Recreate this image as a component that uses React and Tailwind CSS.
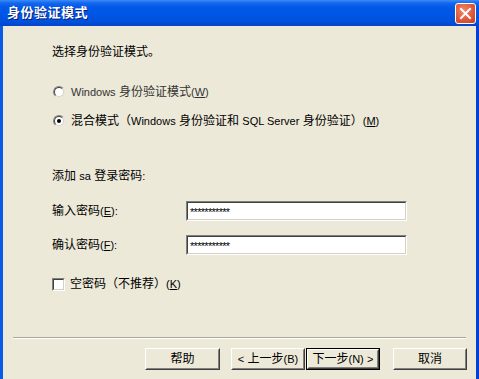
import React from "react";

const font = { fontFamily: '"Liberation Sans", "Noto Sans CJK SC", sans-serif' };

function L({ children }) {
  return <span className="text-[11px]">{children}</span>;
}

function Radio({ checked }) {
  return (
    <span className="relative inline-block w-[12px] h-[12px] rounded-full bg-white border border-t-[#808080] border-l-[#808080] border-b-[#e8e6dc] border-r-[#e8e6dc] shrink-0">
      <span className="absolute inset-0 rounded-full border border-t-[#404040] border-l-[#404040] border-b-[#d4d0c8] border-r-[#d4d0c8]" />
      {checked && (
        <span className="absolute left-[3px] top-[3px] w-[4px] h-[4px] rounded-full bg-black" />
      )}
    </span>
  );
}

function Sunken({ className, children }) {
  return (
    <div className={"border border-t-[#808080] border-l-[#808080] border-b-white border-r-white " + className}>
      <div className="w-full h-full border border-t-[#404040] border-l-[#404040] border-b-[#d4d0c8] border-r-[#d4d0c8] bg-white flex items-center">
        {children}
      </div>
    </div>
  );
}

function Btn({ children, def, w }) {
  return (
    <div className={(def ? "border border-black " : "") + "h-[22px] " + w}>
      <div className="h-full w-full border border-t-white border-l-white border-b-[#404040] border-r-[#404040] bg-[#ece9d8]">
        <div className="h-full w-full border border-t-[#ece9d8] border-l-[#ece9d8] border-b-[#808080] border-r-[#808080] flex items-center justify-center text-[12px] text-black leading-none">
          {children}
        </div>
      </div>
    </div>
  );
}

export default function App() {
  return (
    <div className="w-[479px] h-[379px] overflow-hidden flex flex-col bg-[#0054e3]" style={font}>
      {/* Title bar */}
      <div className="h-[26px] shrink-0 flex items-center justify-between pl-[7px] pr-[3px] bg-[linear-gradient(to_bottom,#3b8cf8_0%,#1466ec_12%,#0058e8_30%,#0055e4_60%,#0050db_85%,#0543c6_100%)]">
        <span className="text-white font-bold text-[13px] tracking-[0.5px] [text-shadow:1px_1px_0_#0a1f7a]">身份验证模式</span>
        <div className="w-[21px] h-[21px] rounded-[3px] border border-white bg-[radial-gradient(circle_at_40%_35%,#f08a6a_0%,#e0583a_55%,#c53a1c_100%)] flex items-center justify-center">
          <svg width="13" height="13" viewBox="0 0 13 13">
            <path d="M2 2 L11 11 M11 2 L2 11" stroke="white" strokeWidth="2" strokeLinecap="square" />
          </svg>
        </div>
      </div>
      {/* Body */}
      <div className="flex-1 flex px-[3px] bg-[linear-gradient(to_right,#0a5ce8,#0441d2)]">
        <div className="flex-1 bg-[#ece9d8] flex flex-col text-[12px] text-black leading-[16px]">
          <div className="pl-[49px] flex flex-col">
            <div className="mt-[18px] h-[16px]">选择身份验证模式。</div>
            <div className="mt-[24px] h-[16px] flex items-center gap-[6px] pl-[1px]">
              <Radio />
              <span className="text-[#333]"><L>Windows</L> 身份验证模式<L>(<u>W</u>)</L></span>
            </div>
            <div className="mt-[13px] h-[16px] flex items-center gap-[6px] pl-[1px]">
              <Radio checked />
              <span>混合模式（<L>Windows</L> 身份验证和 <L>SQL Server</L> 身份验证）<L>(<u>M</u>)</L></span>
            </div>
            <div className="mt-[39px] h-[16px]">添加 <L>sa</L> 登录密码<L>:</L></div>
            <div className="mt-[17px] h-[20px] flex items-center">
              <span className="w-[134px]">输入密码<L>(<u>E</u>):</L></span>
              <Sunken className="w-[221px] h-[20px]">
                <span className="pl-[2px] text-[11px] leading-none tracking-[-0.7px] pt-[3px]">***********</span>
              </Sunken>
            </div>
            <div className="mt-[14px] h-[20px] flex items-center">
              <span className="w-[134px]">确认密码<L>(<u>F</u>):</L></span>
              <Sunken className="w-[221px] h-[20px]">
                <span className="pl-[2px] text-[11px] leading-none tracking-[-0.7px] pt-[3px]">***********</span>
              </Sunken>
            </div>
            <div className="mt-[21px] h-[16px] flex items-center gap-[5px]">
              <Sunken className="w-[13px] h-[13px]" />
              <span>空密码（不推荐）<L>(<u>K</u>)</L></span>
            </div>
          </div>
          <div className="mt-[45px] mx-[10px] h-[2px] border-t border-t-[#aca899] border-b border-b-white" />
          <div className="mt-[9px] flex justify-end pr-[9px]">
            <Btn w="w-[75px]">帮助</Btn>
            <div className="w-[11px]" />
            <Btn w="w-[74px]"><L>&lt;</L>&nbsp;上一步<L>(B)</L></Btn>
            <div className="w-[1px]" />
            <Btn def w="w-[74px]">下一步<L>(N)</L>&nbsp;<L>&gt;</L></Btn>
            <div className="w-[13px]" />
            <Btn w="w-[74px]">取消</Btn>
          </div>
        </div>
      </div>
    </div>
  );
}
